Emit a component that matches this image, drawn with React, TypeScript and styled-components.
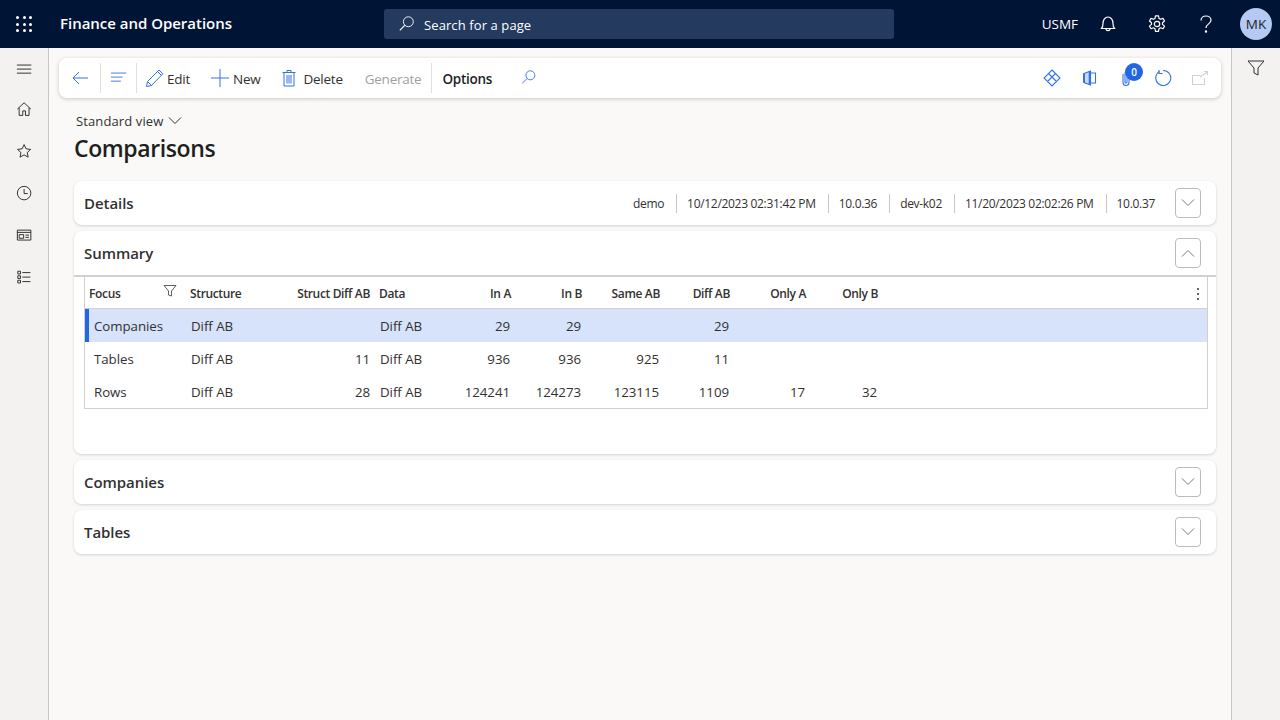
import styled, { createGlobalStyle } from "styled-components";

const GlobalStyle = createGlobalStyle`
  html, body {
    margin: 0;
    padding: 0;
    height: 100%;
    overflow: hidden;
    background: #faf9f8;
    font-family: "Open Sans", "Noto Sans", sans-serif;
    color: #323130;
  }
  #root {
    height: 100%;
  }
`;

const COLUMNS = "101px 89px 100px 70px 70px 71px 78px 70px 76px 72px 1fr 18px";
const BLUE = "#3470e6";

const rows = [
  { focus: "Companies", structure: "Diff AB", structDiff: "", data: "Diff AB", inA: "29", inB: "29", same: "", diff: "29", onlyA: "", onlyB: "", selected: true },
  { focus: "Tables", structure: "Diff AB", structDiff: "11", data: "Diff AB", inA: "936", inB: "936", same: "925", diff: "11", onlyA: "", onlyB: "", selected: false },
  { focus: "Rows", structure: "Diff AB", structDiff: "28", data: "Diff AB", inA: "124241", inB: "124273", same: "123115", diff: "1109", onlyA: "17", onlyB: "32", selected: false },
];

const details = ["demo", "10/12/2023 02:31:42 PM", "10.0.36", "dev-k02", "11/20/2023 02:02:26 PM", "10.0.37"];

function Icon(props: { size?: number; color?: string; weight?: number; children: React.ReactNode }) {
  const size = props.size ?? 20;
  return (
    <svg width={size} height={size} viewBox="0 0 20 20" fill="none" stroke={props.color ?? "currentColor"} strokeWidth={props.weight ?? 1} style={{ display: "block" }}>
      {props.children}
    </svg>
  );
}

function Chevron(props: { up?: boolean; color?: string }) {
  return (
    <svg width="14" height="8" viewBox="0 0 14 8" fill="none" stroke={props.color ?? "#7d7b79"} strokeWidth="1">
      <path d={props.up ? "M1 7.5 7 1.5 13 7.5" : "M1 .5 7 6.5 13 .5"} />
    </svg>
  );
}

function SectionCard(props: { title: string; open?: boolean; children?: React.ReactNode; aside?: React.ReactNode }) {
  return (
    <Card>
      <CardHeader>
        <CardTitle>{props.title}</CardTitle>
        {props.aside}
        <ExpandButton>
          <Chevron up={props.open} />
        </ExpandButton>
      </CardHeader>
      {props.children}
    </Card>
  );
}

export default function App() {
  return (
    <Page>
      <GlobalStyle />
      <TopBar>
        <Waffle>
          {Array.from({ length: 9 }).map((_, i) => (
            <WaffleDot key={i} />
          ))}
        </Waffle>
        <Brand>Finance and Operations</Brand>
        <SearchBox>
          <Icon size={18}>
            <circle cx="11.5" cy="7.5" r="5.5" />
            <path d="M7.5 11.5 2 17" strokeWidth="1.3" />
          </Icon>
          <SearchText>Search for a page</SearchText>
        </SearchBox>
        <TopRight>
          <Company>USMF</Company>
          <TopIcon>
            <Icon weight={1.2}>
              <path d="M3.500 14.500c1-1.200 1.500-2.500 1.500-5 0-3.500 2-6.500 5-6.500s5 3 5 6.500c0 2.500.5 3.800 1.500 5Z" />
              <path d="M8 14.500c0 1.300.8 2.200 2 2.200s2-.9 2-2.200" />
            </Icon>
          </TopIcon>
          <TopIcon>
            <Icon weight={1.2}>
              <circle cx="10" cy="10" r="2.700" />
              <path d="M8.500 1.800h3l.5 2.600 1.500.9 2.500-.9 1.500 2.600-2 1.700v1.700l2 1.700-1.500 2.600-2.500-.9-1.500.9-.5 2.600h-3l-.5-2.600-1.500-.9-2.500.9-1.500-2.600 2-1.700V8.700l-2-1.700 1.500-2.600 2.500.9L8 4.400Z" strokeLinejoin="round" />
            </Icon>
          </TopIcon>
          <TopIcon>
            <Icon weight={1.2}>
              <path d="M5 6.500C5 3.800 7.300 2 10 2s5 1.800 5 4.300c0 3.700-5 3.500-5 7.700" />
              <circle cx="10" cy="17.500" r=".6" fill="#fff" />
            </Icon>
          </TopIcon>
          <Avatar>MK</Avatar>
        </TopRight>
      </TopBar>
      <Body>
        <NavRail>
          <NavMenu>
            <Icon size={18}>
              <path d="M1 4.500h16M1 9h16M1 13.500h16" />
            </Icon>
          </NavMenu>
          <NavIcon>
            <Icon size={18}>
              <path d="M1.500 9 9 2l7.500 7M3.500 7.500v8.500h4v-5h3v5h4V7.500" />
            </Icon>
          </NavIcon>
          <NavIcon>
            <Icon size={18}>
              <path d="m9 1.800 2.200 4.700 5.100.6-3.800 3.500 1 5.100L9 13.200l-4.500 2.500 1-5.100-3.800-3.500 5.100-.6Z" />
            </Icon>
          </NavIcon>
          <NavIcon>
            <Icon size={18}>
              <circle cx="9" cy="9" r="7.500" />
              <path d="M9 4.500V9.500H13" />
            </Icon>
          </NavIcon>
          <NavIcon>
            <Icon size={18}>
              <path d="M1.500 3.500h15v11h-15ZM1.500 6h15" />
              <path d="M3.500 8.500h5v4h-5ZM10.500 9h4M10.500 11.500h4" />
            </Icon>
          </NavIcon>
          <NavIcon>
            <Icon size={18}>
              <path d="M2 2.500h3v3H2ZM2 7.500h3v3H2ZM2 12.500h3v3H2ZM7 4h9M7 9h9M7 14h9" />
            </Icon>
          </NavIcon>
        </NavRail>
        <Main>
          <ActionPane>
            <ActionIcon>
              <Icon color={BLUE}>
                <path d="M18 10H3M9 4 3 10l6 6" />
              </Icon>
            </ActionIcon>
            <Divider />
            <ActionIcon $narrow>
              <Icon color={BLUE} size={18}>
                <path d="M1 4.500h17M1 9h13M1 13.500h11" />
              </Icon>
            </ActionIcon>
            <Divider />
            <ActionButton $first>
              <Icon color={BLUE}>
                <path d="M2.500 18.500l1-5L15 2l3.800 3.800L7.500 17.500Z" />
                <path d="M3.500 13.500l4 4M13.500 3.500l4 4" />
              </Icon>
              <ActionLabel>Edit</ActionLabel>
            </ActionButton>
            <ActionButton>
              <Icon color={BLUE}>
                <path d="M10 1v18M1 10h18" />
              </Icon>
              <ActionLabel>New</ActionLabel>
            </ActionButton>
            <ActionButton>
              <Icon color={BLUE}>
                <path d="M2.500 4.500h13M7 4.500V2.500h4v2M4 4.500V18h10V4.500M7 7v8.500M9 7v8.500M11 7v8.500" />
              </Icon>
              <ActionLabel>Delete</ActionLabel>
            </ActionButton>
            <ActionButton $disabled>
              <ActionLabel>Generate</ActionLabel>
            </ActionButton>
            <Divider />
            <OptionsTab>Options</OptionsTab>
            <ActionIcon $wide>
              <Icon color={BLUE} size={18}>
                <circle cx="11.500" cy="7" r="5" />
                <path d="M8 10.500 2.500 16" />
              </Icon>
            </ActionIcon>
            <ActionSpacer />
            <RightActions>
              <RightIcon>
                <svg width="18" height="18" viewBox="0 0 18 18" fill="none" stroke={BLUE} strokeWidth="1.100">
                  <path d="M9 1 17 9l-8 8-8-8Z" />
                  <path d="M5.500 4.500 13 12M12.500 4.500 5 12" />
                </svg>
              </RightIcon>
              <RightIcon>
                <svg width="18" height="18" viewBox="0 0 18 18" fill="none" stroke={BLUE} strokeWidth="1.100">
                  <path d="M4 4.500 10.500 2v14L4 13.500Z" fill="#c9d9f8" />
                  <path d="M4 4.500v9" strokeWidth="2" />
                  <path d="M9.800 2.500v13" strokeWidth="2.200" />
                  <path d="M10.500 4H15.500v10h-5" />
                </svg>
              </RightIcon>
              <RightIcon>
                <svg width="18" height="18" viewBox="0 0 18 18" fill="none" stroke={BLUE} strokeWidth="1.100">
                  <path d="M6 5v8.500a3 3 0 0 0 6 0V4.500a2 2 0 0 0-4 0V13a1 1 0 0 0 2 0V5" />
                </svg>
                <Badge>0</Badge>
              </RightIcon>
              <RightIcon>
                <svg width="18" height="18" viewBox="0 0 18 18" fill="none" stroke={BLUE} strokeWidth="1.100">
                  <path d="M5.500 2.500A7.500 7.500 0 1 0 9 1.500" />
                  <path d="M5 1v3.500h3.500" strokeLinejoin="miter" />
                </svg>
              </RightIcon>
              <RightIcon>
                <svg width="18" height="18" viewBox="0 0 18 18" fill="none" stroke="#d9cfc6" strokeWidth="1.100">
                  <path d="M13.500 9v6.500h-12v-9h8" />
                  <path d="M9 8l7.500-5M13 2.500h3.500V6" />
                </svg>
              </RightIcon>
            </RightActions>
          </ActionPane>
          <Content>
            <ViewPicker>
              Standard view
              <Chevron color="#323130" />
            </ViewPicker>
            <PageTitle>Comparisons</PageTitle>
            <Stack>
              <SectionCard
                title="Details"
                aside={
                  <DetailStrip>
                    {details.map((d) => (
                      <DetailItem key={d}>{d}</DetailItem>
                    ))}
                  </DetailStrip>
                }
              />
              <SectionCard title="Summary" open>
                <SummaryBody>
                  <Table>
                    <HeaderRow>
                      <HeaderCell>
                        Focus
                        <FilterMark>
                          <svg width="14" height="14" viewBox="0 0 14 14" fill="none" stroke="#605e5c" strokeWidth="1">
                            <path d="M1 1.500h12L8.500 7v5L5.500 11V7Z" />
                          </svg>
                        </FilterMark>
                      </HeaderCell>
                      <HeaderCell>Structure</HeaderCell>
                      <HeaderCell $right $inset>Struct Diff AB</HeaderCell>
                      <HeaderCell>Data</HeaderCell>
                      <HeaderCell $right>In A</HeaderCell>
                      <HeaderCell $right>In B</HeaderCell>
                      <HeaderCell $right>Same AB</HeaderCell>
                      <HeaderCell $right>Diff AB</HeaderCell>
                      <HeaderCell $right>Only A</HeaderCell>
                      <HeaderCell $right>Only B</HeaderCell>
                      <HeaderCell />
                      <MoreDots>
                        <svg width="4" height="14" viewBox="0 0 4 14" fill="#323130">
                          <circle cx="2" cy="2" r="1" />
                          <circle cx="2" cy="7" r="1" />
                          <circle cx="2" cy="12" r="1" />
                        </svg>
                      </MoreDots>
                    </HeaderRow>
                    {rows.map((r) => (
                      <DataRow key={r.focus} $selected={r.selected}>
                        <FocusCell>{r.focus}</FocusCell>
                        <DataCell>{r.structure}</DataCell>
                        <DataCell $right>{r.structDiff}</DataCell>
                        <DataCell>{r.data}</DataCell>
                        <DataCell $right>{r.inA}</DataCell>
                        <DataCell $right>{r.inB}</DataCell>
                        <DataCell $right>{r.same}</DataCell>
                        <DataCell $right>{r.diff}</DataCell>
                        <DataCell $right>{r.onlyA}</DataCell>
                        <DataCell $right>{r.onlyB}</DataCell>
                      </DataRow>
                    ))}
                  </Table>
                </SummaryBody>
              </SectionCard>
              <SectionCard title="Companies" />
              <SectionCard title="Tables" />
            </Stack>
          </Content>
        </Main>
        <RightPane>
          <svg width="18" height="18" viewBox="0 0 18 18" fill="none" stroke="#323130" strokeWidth="1">
            <path d="M1 2h16l-6 7v7l-4-2V9Z" />
          </svg>
        </RightPane>
      </Body>
    </Page>
  );
}

const Page = styled.div`
  width: 1280px;
  height: 720px;
  display: flex;
  flex-direction: column;
  overflow: hidden;
`;

const TopBar = styled.header`
  height: 48px;
  flex: none;
  display: flex;
  align-items: center;
  background: #001536;
  color: #ffffff;
`;

const Waffle = styled.div`
  width: 16px;
  margin-left: 16px;
  display: grid;
  grid-template-columns: repeat(3, 3px);
  gap: 3.5px;
`;

const WaffleDot = styled.span`
  width: 3px;
  height: 3px;
  border-radius: 50%;
  background: #ffffff;
`;

const Brand = styled.div`
  margin-left: 28px;
  margin-bottom: 2px;
  width: 324px;
  font-size: 15px;
  font-weight: 600;
  letter-spacing: -0.02px;
`;

const SearchBox = styled.div`
  width: 510px;
  height: 30px;
  box-sizing: border-box;
  padding-left: 14px;
  display: flex;
  align-items: center;
  gap: 8px;
  background: #243a5e;
  border-radius: 3px;
`;

const SearchText = styled.span`
  font-size: 13px;
  padding-top: 2px;
  letter-spacing: 0.1px;
`;

const TopRight = styled.div`
  margin-left: auto;
  display: flex;
  align-items: center;
  padding-right: 8px;
`;

const Company = styled.span`
  font-size: 13.5px;
  margin-right: 5px;
`;

const TopIcon = styled.div`
  width: 49px;
  display: flex;
  justify-content: center;
`;

const Avatar = styled.div`
  width: 32px;
  height: 32px;
  margin-left: 10px;
  border-radius: 50%;
  background: #b4c9f3;
  color: #201f1e;
  font-size: 13.5px;
  display: flex;
  align-items: center;
  justify-content: center;
`;

const Body = styled.div`
  flex: 1;
  display: flex;
  min-height: 0;
`;

const NavRail = styled.nav`
  width: 48px;
  flex: none;
  border-right: 1px solid #c8c6c4;
  background: #f3f2f1;
  color: #201f1e;
  display: flex;
  flex-direction: column;
  align-items: center;
  padding-top: 13px;
`;

const NavMenu = styled.div`
  height: 18px;
  margin-bottom: 10px;
  padding-left: 1px;
`;

const NavIcon = styled.div`
  height: 42px;
  width: 48px;
  display: flex;
  align-items: center;
  justify-content: center;
  padding-left: 1px;
  box-sizing: border-box;
`;

const Main = styled.main`
  flex: 1;
  min-width: 0;
  padding: 10px 10px 0;
  display: flex;
  flex-direction: column;
`;

const ActionPane = styled.div`
  height: 40px;
  flex: none;
  display: flex;
  align-items: center;
  background: #ffffff;
  border-radius: 8px;
  box-shadow: 0 1px 4px rgba(0, 0, 0, 0.2);
  font-size: 13.5px;
  letter-spacing: -0.25px;
`;

const ActionIcon = styled.div<{ $narrow?: boolean; $wide?: boolean }>`
  width: ${(props) => (props.$narrow ? 35 : props.$wide ? 26 : 41)}px;
  margin-left: ${(props) => (props.$wide ? 24 : 0)}px;
  display: flex;
  justify-content: center;
`;

const Divider = styled.span`
  width: 1px;
  height: 30px;
  background: #e1dfdd;
`;

const ActionButton = styled.div<{ $first?: boolean; $disabled?: boolean }>`
  display: flex;
  align-items: center;
  gap: 3px;
  margin-left: ${(props) => (props.$first ? 7 : props.$disabled ? 22 : 20)}px;
  margin-right: ${(props) => (props.$disabled ? 10 : 0)}px;
  color: ${(props) => (props.$disabled ? "#a19f9d" : "#323130")};
`;

const ActionLabel = styled.span`
  padding-top: 2px;
`;

const OptionsTab = styled.div`
  margin-left: 10px;
  padding-top: 2px;
  font-weight: 600;
  color: #201f1e;
`;

const ActionSpacer = styled.div`
  flex: 1;
`;

const RightActions = styled.div`
  display: flex;
  align-items: center;
  padding-right: 3px;
`;

const RightIcon = styled.div`
  position: relative;
  width: 37px;
  display: flex;
  justify-content: center;
`;

const Badge = styled.span`
  position: absolute;
  top: -6px;
  left: 18px;
  width: 18px;
  height: 18px;
  border-radius: 50%;
  background: #2266e3;
  color: #ffffff;
  font-size: 10px;
  font-weight: 600;
  display: flex;
  align-items: center;
  justify-content: center;
`;

const Content = styled.div`
  padding: 14px 5px 0 15px;
`;

const ViewPicker = styled.div`
  margin-left: 2px;
  height: 18px;
  display: flex;
  align-items: center;
  gap: 4px;
  font-size: 13px;
  letter-spacing: 0.12px;
`;

const PageTitle = styled.h1`
  margin: 2px 0 17px;
  height: 32px;
  line-height: 32px;
  font-size: 23px;
  font-weight: 600;
  letter-spacing: -0.4px;
  color: #201f1e;
`;

const Stack = styled.div`
  display: flex;
  flex-direction: column;
  gap: 6px;
`;

const Card = styled.section`
  background: #ffffff;
  border-radius: 8px;
  box-shadow: 0 1px 3px rgba(0, 0, 0, 0.16);
`;

const CardHeader = styled.div`
  height: 44px;
  display: flex;
  align-items: center;
  padding: 0 15px 0 10px;
`;

const CardTitle = styled.h2`
  margin: 0;
  font-size: 15px;
  font-weight: 600;
  letter-spacing: -0.05px;
  color: #323130;
  flex: 1;
`;

const ExpandButton = styled.div`
  width: 26px;
  height: 30px;
  box-sizing: border-box;
  border: 1px solid #bebcba;
  border-radius: 4px;
  display: flex;
  align-items: center;
  justify-content: center;
`;

const DetailStrip = styled.div`
  display: flex;
  align-items: center;
  margin-right: 8px;
`;

const DetailItem = styled.span`
  font-size: 12px;
  letter-spacing: -0.31px;
  color: #323130;
  padding: 1px 12px 0 10px;
  height: 18px;
  line-height: 18px;
  border-left: 1px solid #c8c6c4;

  &:first-child {
    border-left: none;
  }
`;

const SummaryBody = styled.div`
  border-top: 2px solid #d2d0ce;
  padding: 0 8px 45px 10px;
  height: 179px;
  box-sizing: border-box;
`;

const Table = styled.div`
  border: 1px solid #d2d0ce;
  border-top: none;
  height: 131px;
`;

const HeaderRow = styled.div`
  display: grid;
  grid-template-columns: ${COLUMNS};
  height: 32px;
  box-sizing: border-box;
  padding-top: 2px;
  border-bottom: 1px solid #d2d0ce;
  align-items: center;
`;

const HeaderCell = styled.div<{ $right?: boolean; $inset?: boolean }>`
  position: relative;
  padding: 0 ${(props) => (props.$inset ? 5 : 4)}px 0 4px;
  font-size: 12px;
  font-weight: 600;
  letter-spacing: -0.35px;
  color: #323130;
  white-space: nowrap;
  text-align: ${(props) => (props.$right ? "right" : "left")};
`;

const FilterMark = styled.span`
  position: absolute;
  right: 9px;
  top: -1px;
`;

const MoreDots = styled.div`
  display: flex;
  justify-content: center;
`;

const DataRow = styled.div<{ $selected?: boolean }>`
  display: grid;
  grid-template-columns: ${COLUMNS};
  height: 33px;
  align-items: center;
  background: ${(props) => (props.$selected ? "#d6e3fa" : "transparent")};
  box-shadow: ${(props) => (props.$selected ? "inset 4px 0 0 #2266e3" : "none")};
`;

const DataCell = styled.div<{ $right?: boolean }>`
  padding: 0 5px;
  font-size: 13.3px;
  letter-spacing: -0.05px;
  color: #323130;
  white-space: nowrap;
  text-align: ${(props) => (props.$right ? "right" : "left")};
`;

const FocusCell = styled(DataCell)`
  padding-left: 9px;
`;

const RightPane = styled.aside`
  width: 49px;
  flex: none;
  border-left: 1px solid #c8c6c4;
  background: #f3f2f1;
  display: flex;
  justify-content: center;
  padding-top: 11px;
  box-sizing: border-box;
`;
